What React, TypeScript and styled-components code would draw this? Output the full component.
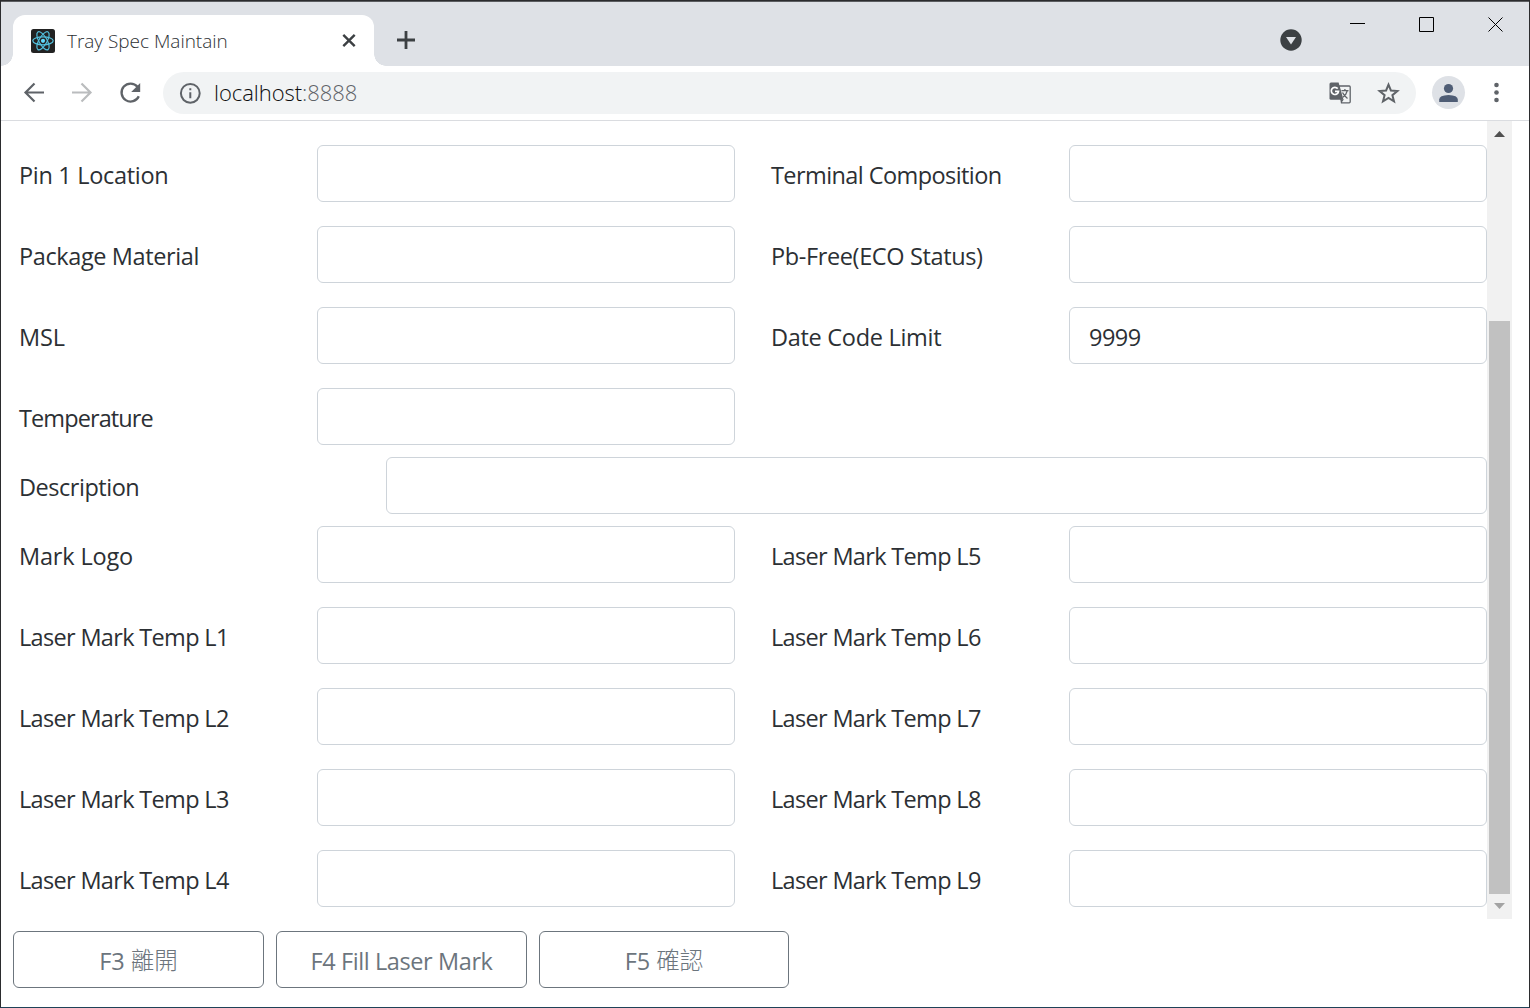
import React from "react";
import styled, { createGlobalStyle } from "styled-components";

const Global = createGlobalStyle`
  *, *::before, *::after { box-sizing: border-box; }
  html, body { margin: 0; padding: 0; overflow: hidden; }
  body { font-family: "Open Sans", "Noto Sans", "Noto Sans CJK TC", sans-serif; background: #fff; }
`;

const Window = styled.div`
  width: 1530px;
  height: 1008px;
  display: flex;
  flex-direction: column;
  background: #fff;
  border: 1px solid #2b2c2e;
  border-bottom-color: #1f4258;
`;

const TabStrip = styled.header`
  height: 65px;
  flex: none;
  display: flex;
  align-items: flex-start;
  background: #dee1e6;
  border-top: 1px solid #5b5d60;
`;

const Tab = styled.div`
  position: relative;
  margin: 13px 0 0 12px;
  width: 361px;
  height: 51px;
  padding: 0 16px 0 18px;
  display: flex;
  align-items: center;
  background: #fff;
  border-radius: 12px 12px 0 0;
  &::before, &::after {
    content: "";
    position: absolute;
    bottom: 0;
    width: 12px;
    height: 12px;
  }
  &::before { left: -12px; background: radial-gradient(circle at 0 0, transparent 11.5px, #fff 12px); }
  &::after { right: -12px; background: radial-gradient(circle at 100% 0, transparent 11.5px, #fff 12px); }
`;

const TabTitle = styled.span`
  flex: 1;
  margin-left: 12px;
  font-size: 19px;
  font-weight: 300;
  line-height: 26px;
  letter-spacing: -0.02px;
  color: #2c3033;
  white-space: nowrap;
`;

const NewTab = styled.div`
  margin: 28px 0 0 22px;
  height: 20px;
  flex: 1;
`;

const TabSearch = styled.div`
  margin: 27px 48px 0 0;
  height: 22px;
`;

const WindowControls = styled.div`
  display: flex;
  gap: 53px;
  margin: 14px 25px 0 0;
  height: 18px;
`;

const Toolbar = styled.div`
  height: 55px;
  flex: none;
  display: flex;
  align-items: center;
  padding: 0 16px 1px 20px;
  border-bottom: 1px solid #dadce0;
`;

const NavButtons = styled.div`
  display: flex;
  gap: 22px;
  width: 142px;
`;

const Glyph = styled.svg`
  display: block;
  flex: none;
`;

const AddressBar = styled.div`
  width: 1253px;
  height: 42px;
  border-radius: 21px;
  background: #f1f3f4;
  display: flex;
  align-items: center;
  padding: 0 16px 0 15px;
`;

const Url = styled.span`
  flex: 1;
  margin-left: 12px;
  padding-bottom: 2px;
  font-size: 22px;
  font-weight: 300;
  line-height: 30px;
  letter-spacing: -0.04px;
  color: #0c0d0e;
`;

const Port = styled.span`
  color: #5f6368;
`;

const PageActions = styled.div`
  display: flex;
  gap: 24px;
`;

const Avatar = styled.div`
  width: 33px;
  height: 33px;
  margin: 0 24px 0 16px;
  border-radius: 50%;
  background: #dee1e6;
  display: flex;
  align-items: center;
  justify-content: center;
`;

const Page = styled.main`
  display: flex;
  height: 798px;
  flex: none;
`;

const Form = styled.form`
  width: 1486px;
  padding: 24px 0 0 18px;
  display: grid;
  grid-template-columns: 716px 716px;
  column-gap: 36px;
  align-content: start;
`;

const Field = styled.label<{ $tight?: boolean; $wide?: boolean }>`
  display: grid;
  grid-template-columns: ${(p) => (p.$wide ? "367px 1101px" : "298px 418px")};
  grid-column: ${(p) => (p.$wide ? "1 / -1" : "auto")};
  height: 57px;
  margin-bottom: ${(p) => (p.$tight ? 12 : 24)}px;
`;

const Caption = styled.span<{ $spacing: number }>`
  padding-top: 14px;
  font-size: 23.5px;
  font-weight: 400;
  line-height: 32px;
  letter-spacing: ${(p) => p.$spacing}px;
  color: #2c3034;
  white-space: nowrap;
`;

const Input = styled.input`
  width: 100%;
  height: 57px;
  padding: 3px 19px 0;
  border: 1px solid #ced4da;
  border-radius: 6px;
  background: #fff;
  font: 400 23.5px/32px "Open Sans", "Noto Sans", sans-serif;
  letter-spacing: -0.5px;
  color: #2c3034;
`;

const ScrollBar = styled.div`
  width: 25px;
  height: 798px;
  background: #f1f1f1;
  display: flex;
  flex-direction: column;
  align-items: center;
`;

const ScrollArrow = styled.div`
  flex: none;
  width: 25px;
  height: 25px;
  display: flex;
  justify-content: center;
  align-items: center;
`;

const Thumb = styled.div`
  width: 21px;
  height: 573px;
  margin-top: 175px;
  background: #c1c1c1;
`;

const Actions = styled.footer`
  display: flex;
  gap: 12px;
  padding: 12px 0 0 12px;
`;

const ActionButton = styled.button<{ $width: number; $spacing?: number }>`
  width: ${(p) => p.$width}px;
  height: 57px;
  padding: 3px 0 0;
  border: 1px solid #6c757d;
  border-radius: 6px;
  background: #fff;
  color: #6c757d;
  font: 400 23.5px/32px "Open Sans", "Noto Sans", "Noto Sans CJK TC", sans-serif;
  letter-spacing: ${(p) => p.$spacing ?? 0}px;
  white-space: nowrap;
`;

const Han = styled.span`
  vertical-align: 1px;
  font: 300 23.5px/24px "Noto Sans CJK TC", sans-serif;
`;

type FieldSpec = { label: string; spacing: number; value?: string; tight?: boolean; wide?: boolean };

const upper: [FieldSpec, FieldSpec?][] = [
  [{ label: "Pin 1 Location", spacing: -0.31 }, { label: "Terminal Composition", spacing: -0.58 }],
  [{ label: "Package Material", spacing: -0.39 }, { label: "Pb-Free(ECO Status)", spacing: -0.37 }],
  [{ label: "MSL", spacing: -0.1 }, { label: "Date Code Limit", spacing: -0.29, value: "9999" }],
  [{ label: "Temperature", spacing: -0.9, tight: true }],
];

const lower: [FieldSpec, FieldSpec?][] = [
  [{ label: "Mark Logo", spacing: -0.17 }, { label: "Laser Mark Temp L5", spacing: -0.67 }],
  [{ label: "Laser Mark Temp L1", spacing: -0.67 }, { label: "Laser Mark Temp L6", spacing: -0.67 }],
  [{ label: "Laser Mark Temp L2", spacing: -0.67 }, { label: "Laser Mark Temp L7", spacing: -0.67 }],
  [{ label: "Laser Mark Temp L3", spacing: -0.67 }, { label: "Laser Mark Temp L8", spacing: -0.67 }],
  [{ label: "Laser Mark Temp L4", spacing: -0.67 }, { label: "Laser Mark Temp L9", spacing: -0.67 }],
];

function FormField({ label, spacing, value = "", tight, wide }: FieldSpec) {
  return (
    <Field $tight={tight} $wide={wide}>
      <Caption $spacing={spacing}>{label}</Caption>
      <Input defaultValue={value} />
    </Field>
  );
}

const rows = (pairs: [FieldSpec, FieldSpec?][]) =>
  pairs.map(([a, b]) => (
    <React.Fragment key={a.label}>
      <FormField {...a} />
      {b && <FormField {...b} />}
    </React.Fragment>
  ));

function ReactLogo() {
  return (
    <Glyph width="24" height="24" viewBox="0 0 24 24">
      <rect width="24" height="24" rx="2.5" fill="#222" />
      <g fill="none" stroke="#53c1de" strokeWidth="1.2">
        <ellipse cx="12" cy="11.8" rx="10.2" ry="4" />
        <ellipse cx="12" cy="11.8" rx="10.2" ry="4" transform="rotate(60 12 11.8)" />
        <ellipse cx="12" cy="11.8" rx="10.2" ry="4" transform="rotate(120 12 11.8)" />
      </g>
      <circle cx="12" cy="11.8" r="2.1" fill="#61dafb" />
    </Glyph>
  );
}

export default function App() {
  return (
    <>
      <Global />
      <Window>
        <TabStrip>
          <Tab>
            <ReactLogo />
            <TabTitle>Tray Spec Maintain</TabTitle>
            <Glyph width="18" height="18" viewBox="0 0 18 18" stroke="#3c4043" strokeWidth="2.4">
              <path d="M3.3 2.8 14.7 14.2M14.7 2.8 3.3 14.2" />
            </Glyph>
          </Tab>
          <NewTab>
            <Glyph width="20" height="20" viewBox="0 0 20 20" stroke="#3c4043" strokeWidth="2.8">
              <path d="M10 1v18M1 10h18" />
            </Glyph>
          </NewTab>
          <TabSearch>
            <Glyph width="22" height="22" viewBox="0 0 22 22">
              <circle cx="11" cy="11" r="10.7" fill="#3c4043" />
              <path d="M6 8h10L11 15.5z" fill="#dee1e6" />
            </Glyph>
          </TabSearch>
          <WindowControls>
            <Glyph width="16" height="16" viewBox="0 0 16 16"><path d="M0 7.5h15" stroke="#000" /></Glyph>
            <Glyph width="16" height="16" viewBox="0 0 16 16"><path d="M.5 1.5h14v14H.5z" fill="none" stroke="#000" /></Glyph>
            <Glyph width="16" height="16" viewBox="0 0 16 16"><path d="M.5 1.5l14 14M14.5 1.5l-14 14" stroke="#000" /></Glyph>
          </WindowControls>
        </TabStrip>
        <Toolbar>
          <NavButtons>
            <Glyph width="26" height="26" viewBox="0 0 26 26" fill="none" stroke="#5f6368" strokeWidth="2.2">
              <path d="M23 12.5H4.5M13.5 3.5 4.5 12.5l9 9" />
            </Glyph>
            <Glyph width="26" height="26" viewBox="0 0 26 26" fill="none" stroke="#babcbe" strokeWidth="2.2">
              <path d="M3 12.5h18.5M12.5 3.5l9 9-9 9" />
            </Glyph>
            <Glyph width="28" height="26" viewBox="0 0 28 26">
              <path d="M20.5 6.8A9 9 0 1 0 21.8 16.2" fill="none" stroke="#5f6368" strokeWidth="2.3" />
              <path d="M23.2 3v9h-9z" fill="#5f6368" />
            </Glyph>
          </NavButtons>
          <AddressBar>
            <Glyph width="24" height="24" viewBox="0 0 24 24">
              <circle cx="12.3" cy="12.3" r="9.4" fill="none" stroke="#5f6368" strokeWidth="2" />
              <path d="M11.3 11.3h2v6h-2zM11.3 7.3h2v2h-2z" fill="#5f6368" />
            </Glyph>
            <Url>localhost<Port>:8888</Port></Url>
            <PageActions>
              <Glyph width="24" height="24" viewBox="0 0 24 24">
                <path d="M11 5h10.2q1 0 1 1v14.8q0 1-1 1H13.5z" fill="#f1f3f4" stroke="#5f6368" strokeWidth="1.3" />
                <path d="M3 1.5h7.6l4.9 17.2H3q-1.5 0-1.5-1.5V3q0-1.5 1.5-1.5z" fill="#5f6368" />
                <path d="M12.8 18.6h3l-2.3 3.2z" fill="#5f6368" />
                <path d="M9.700 7.6A3.600 3.600 0 1 0 10.5 10.3H7" fill="none" stroke="#fff" strokeWidth="1.7" />
                <path d="M13.5 9.6h7M16.9 8v1.6M19.3 9.6q-.9 4-4.4 6.6M14.5 11.5q1.7 3.5 5 6" fill="none" stroke="#5f6368" strokeWidth="1.3" />
              </Glyph>
              <Glyph width="24" height="24" viewBox="0 0 24 24">
                <path d="M12.5 3.700l2.400 5.800 6.500.5-5 4.200 1.600 6.200L12.500 17l-5.500 3.400 1.600-6.200-5-4.200 6.500-.5z" fill="none" stroke="#5f6368" strokeWidth="2" />
              </Glyph>
            </PageActions>
          </AddressBar>
          <Avatar>
            <Glyph width="20" height="20" viewBox="0 0 20 20" fill="#4f5d75">
              <circle cx="9.5" cy="5.5" r="4.6" />
              <path d="M.2 19v-2.4q0-4.300 9.300-4.600 9.300.3 9.300 4.600V19z" />
            </Glyph>
          </Avatar>
          <Glyph width="14" height="22" viewBox="0 0 14 22" fill="#5f6368">
            <circle cx="7.5" cy="3" r="2.3" />
            <circle cx="7.5" cy="10.5" r="2.3" />
            <circle cx="7.5" cy="18" r="2.3" />
          </Glyph>
        </Toolbar>
        <Page>
          <Form>
            {rows(upper)}
            <FormField label="Description" spacing={-0.47} tight wide />
            {rows(lower)}
          </Form>
          <ScrollBar>
            <ScrollArrow>
              <Glyph width="11" height="7" viewBox="0 0 11 7"><path d="M0 7 5.5 1 11 7z" fill="#505050" /></Glyph>
            </ScrollArrow>
            <Thumb />
            <ScrollArrow>
              <Glyph width="11" height="7" viewBox="0 0 11 7"><path d="M0 0l5.5 6L11 0z" fill="#a3a3a3" /></Glyph>
            </ScrollArrow>
          </ScrollBar>
        </Page>
        <Actions>
          <ActionButton $width={251}>F3 <Han>離開</Han></ActionButton>
          <ActionButton $width={251} $spacing={-0.4}>F4 Fill Laser Mark</ActionButton>
          <ActionButton $width={250}>F5 <Han>確認</Han></ActionButton>
        </Actions>
      </Window>
    </>
  );
}
